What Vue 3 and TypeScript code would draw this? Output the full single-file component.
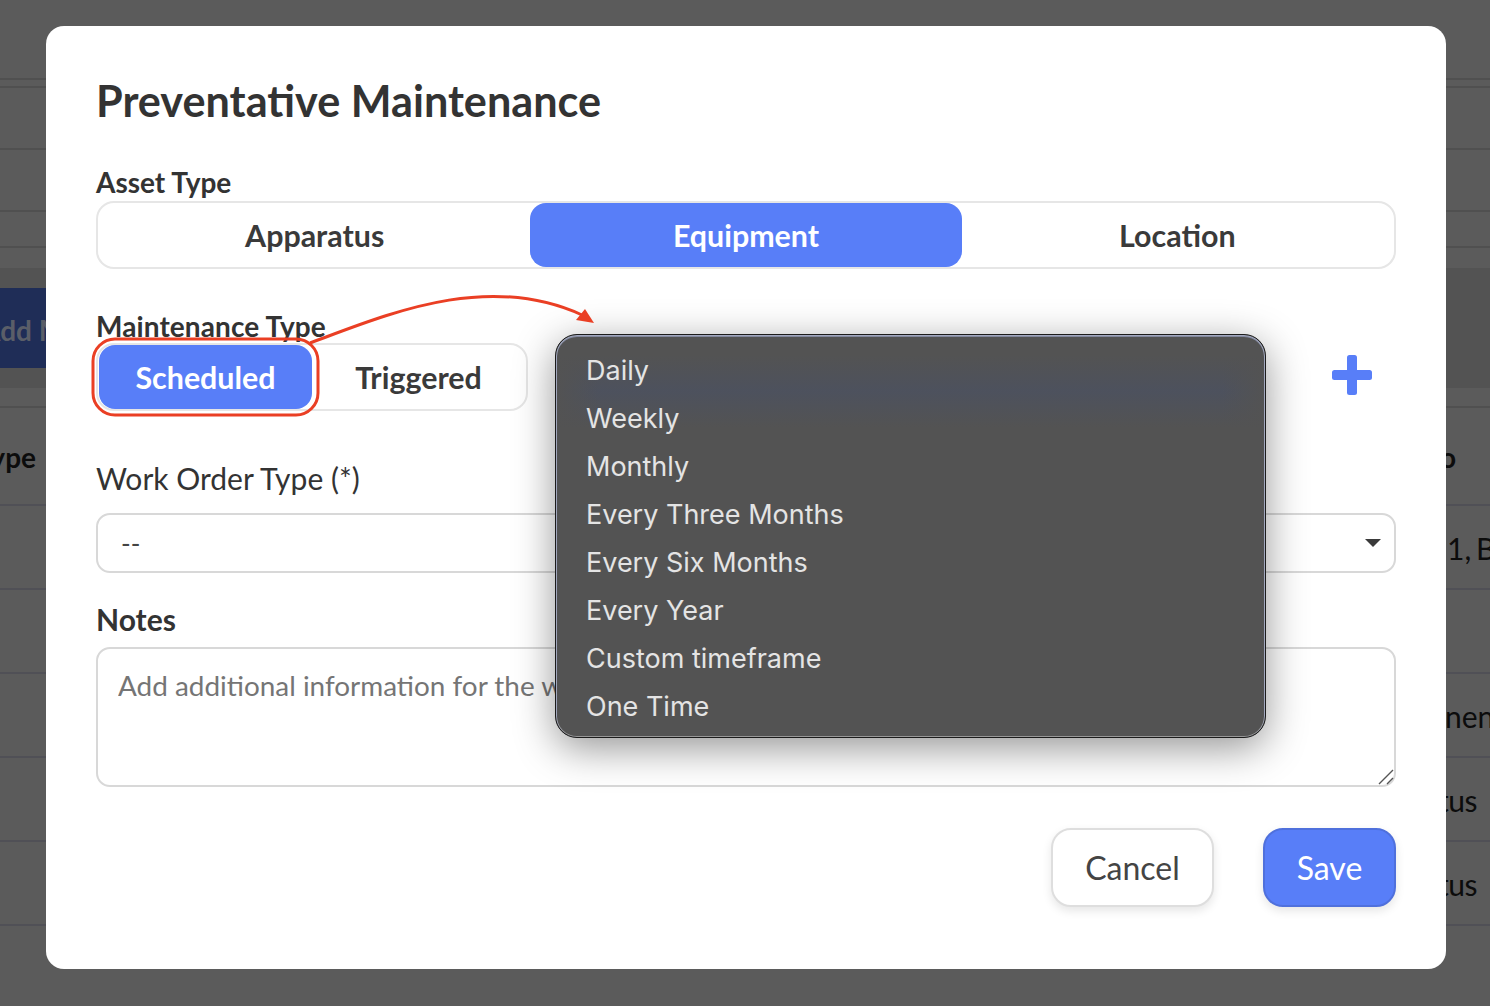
<script setup lang="ts">
const frequencies: string[] = [
  "Daily",
  "Weekly",
  "Monthly",
  "Every Three Months",
  "Every Six Months",
  "Every Year",
  "Custom timeframe",
  "One Time",
];

const rows = [
  { text: "1, B", kind: "" },
  { text: "", kind: "" },
  { text: "nent", kind: "shift" },
  { text: "tus", kind: "end" },
  { text: "tus", kind: "end" },
];
</script>

<template>
  <div class="page">
    <div class="backdrop">
      <div class="top-rule"></div>
      <div class="top-rule second"></div>
      <div class="stat-row"></div>
      <div class="stat-row"></div>
      <div class="stat-row short"></div>
      <div class="toolbar">
        <div class="add-btn"><span>Add M</span></div>
      </div>
      <div class="table-head">
        <span class="head-left">Type</span>
        <span class="head-right">o</span>
      </div>
      <div v-for="(row, i) in rows" :key="i" class="table-row">
        <span class="cell-right" :class="row.kind">{{ row.text }}</span>
      </div>
    </div>

    <div class="modal">
      <h1 class="title">Preventative Maintenance</h1>

      <div class="label bold">Asset Type</div>
      <div class="segment full">
        <button class="seg-btn">Apparatus</button>
        <button class="seg-btn active">Equipment</button>
        <button class="seg-btn">Location</button>
      </div>

      <div class="label bold second-label">Maintenance Type</div>
      <div class="maint-row">
        <div class="segment small">
          <button class="seg-btn active">Scheduled</button>
          <button class="seg-btn">Triggered</button>
        </div>
        <div class="freq-select"></div>
        <svg class="plus" viewBox="0 0 40 40" width="40" height="40">
          <rect x="15" y="0" width="10" height="40" rx="2.5" fill="#587ef8" />
          <rect x="0" y="15" width="40" height="10" rx="2.5" fill="#587ef8" />
        </svg>
      </div>

      <div class="label wo-label">Work Order Type (*)</div>
      <div class="select-box">
        <span>--</span>
        <i class="caret"></i>
      </div>

      <div class="label bold notes-label">Notes</div>
      <div class="notes">
        <span class="placeholder">Add additional information for the work order</span>
        <svg class="grip" viewBox="0 0 16 16" width="16" height="16">
          <path d="M1 15 L15 1 M9 15 L15 9" stroke="#555" stroke-width="1.4" fill="none" />
        </svg>
      </div>

      <div class="actions">
        <button class="action cancel">Cancel</button>
        <button class="action save">Save</button>
      </div>

      <ul class="menu">
        <li v-for="item in frequencies" :key="item">{{ item }}</li>
      </ul>

      <!-- annotation drawn on top of the screenshot -->
      <svg class="annotation" viewBox="0 0 560 130" width="560" height="130">
        <rect x="47" y="48" width="225" height="76" rx="22" fill="none" stroke="#ea3f24" stroke-width="3" />
        <path d="M264 52 C 340 24, 440 -20, 536 24" fill="none" stroke="#ea3f24" stroke-width="3" />
        <path d="M539 18 L548 32 L530 29 Z" fill="#ea3f24" />
      </svg>
    </div>
  </div>
</template>

<style>
html,
body {
  margin: 0;
  background: #5b5b5b;
}
</style>

<style scoped>
.page {
  position: relative;
  width: 1490px;
  height: 1006px;
  overflow: hidden;
  background: #5b5b5b;
  font-family: Lato, "Liberation Sans", sans-serif;
}

.backdrop {
  padding-top: 78px;
  color: #0c0c0c;
  font-size: 30px;
}
.top-rule {
  height: 8px;
  border-top: 2px solid #505050;
  box-sizing: border-box;
}
.top-rule.second {
  height: 2px;
}
.stat-row {
  height: 62px;
  border-bottom: 2px solid #505050;
  box-sizing: border-box;
}
.stat-row.short {
  height: 36px;
}
.toolbar {
  height: 120px;
  margin-top: 20px;
  padding-top: 20px;
  box-sizing: border-box;
  background: #535353;
}
.add-btn {
  width: 46px;
  height: 80px;
  box-sizing: border-box;
  padding-top: 4px;
  background: #1f2d57;
  display: flex;
  align-items: center;
  overflow: hidden;
  color: #5a5e68;
  font-size: 28px;
  font-weight: 700;
  white-space: nowrap;
}
.add-btn span {
  margin-left: -19px;
}
.table-head {
  margin-top: 18px;
  height: 100px;
  border-top: 2px solid #505050;
  border-bottom: 2px solid #505056;
  box-sizing: border-box;
  position: relative;
  font-size: 28px;
  font-weight: 700;
}
.head-left {
  position: absolute;
  right: 1454px;
  top: 32px;
}
.head-right {
  position: absolute;
  left: 1440px;
  top: 32px;
}
.table-row {
  height: 84px;
  border-bottom: 2px solid #505056;
  box-sizing: border-box;
  position: relative;
}
.cell-right {
  position: absolute;
  left: 1447px;
  top: 24px;
  white-space: nowrap;
  word-spacing: -3px;
}
.cell-right.shift {
  left: 1445px;
}
.cell-right.end {
  left: auto;
  right: 13px;
  letter-spacing: -0.5px;
}

.modal {
  position: absolute;
  left: 46px;
  top: 26px;
  width: 1400px;
  height: 943px;
  box-sizing: border-box;
  padding: 49px 50px 0;
  background: #fff;
  border-radius: 18px;
  color: #333;
}
.title {
  margin: 0;
  font-size: 43.2px;
  line-height: 50px;
  font-weight: 700;
  color: #333;
}
.label {
  font-size: 28px;
  line-height: 34px;
  color: #333;
}
.label.bold {
  font-weight: 700;
}
.title + .label {
  margin-top: 40px;
}
.second-label {
  margin-top: 40px;
  letter-spacing: 0.1px;
}
.wo-label {
  margin-top: 49px;
  font-size: 30px;
  line-height: 36px;
}
.notes-label {
  margin-top: 28px;
  font-size: 30px;
  line-height: 36px;
}

.segment {
  display: flex;
  box-sizing: border-box;
  height: 68px;
  padding: 0 1px;
  border: 2px solid #e6e6e6;
  border-radius: 18px;
}
.segment.full {
  width: 1300px;
  margin-top: 2px;
}
.segment.small {
  width: 432px;
  flex: none;
}
.seg-btn {
  flex: 1;
  border: 0;
  background: transparent;
  border-radius: 16px;
  font: 700 30.4px Lato, sans-serif;
  color: #3a3a3a;
  padding: 0;
}
.seg-btn.active {
  background: #587ef8;
  color: #fff;
}

.maint-row {
  display: flex;
  align-items: flex-start;
}
.freq-select {
  flex: none;
  width: 712px;
  height: 66px;
  margin-left: 26px;
}
.plus {
  flex: none;
  margin: 12px 0 0 66px;
}

.select-box {
  display: flex;
  align-items: center;
  justify-content: space-between;
  box-sizing: border-box;
  width: 1300px;
  height: 60px;
  margin-top: 17px;
  padding: 0 13px 0 23px;
  border: 2px solid #d8d8d8;
  border-radius: 14px;
  font-size: 26px;
  color: #444;
}
.caret {
  width: 0;
  height: 0;
  border-left: 8px solid transparent;
  border-right: 8px solid transparent;
  border-top: 8px solid #3a3a3a;
}

.notes {
  position: relative;
  box-sizing: border-box;
  width: 1300px;
  height: 140px;
  margin-top: 10px;
  padding: 18px 20px;
  border: 2px solid #d8d8d8;
  border-radius: 14px;
  font-size: 27.9px;
  line-height: 36px;
  color: #757575;
}
.placeholder {
  display: block;
  width: 437px;
  overflow: hidden;
  white-space: nowrap;
}
.grip {
  position: absolute;
  right: 0;
  bottom: 0;
}

.actions {
  display: flex;
  justify-content: flex-end;
  gap: 49px;
  width: 1300px;
  margin-top: 41px;
}
.action {
  height: 79px;
  border-radius: 20px;
  font: 400 32px Lato, sans-serif;
  box-shadow: 0 4px 10px rgba(0, 0, 0, 0.1);
  padding: 0;
  box-sizing: border-box;
}
.cancel {
  width: 163px;
  background: #fff;
  border: 2px solid #dedede;
  color: #444;
}
.save {
  width: 133px;
  background: #587ef8;
  border: 2px solid #4f70dc;
  color: #fff;
}

.menu {
  position: absolute;
  left: 509px;
  top: 308px;
  width: 711px;
  height: 404px;
  box-sizing: border-box;
  margin: 0;
  padding: 12px 0;
  list-style: none;
  border-radius: 22px;
  background:
    linear-gradient(90deg, #535353 0, rgba(83, 83, 83, 0) 6%, rgba(83, 83, 83, 0) 94%, #535353 100%),
    linear-gradient(180deg, rgba(72, 80, 102, 0) 5%, rgba(72, 80, 102, 0.55) 14%, rgba(72, 80, 102, 0) 23%),
    #535353;
  border: 1px solid #1c1c1c;
  box-shadow:
    inset 0 1px 0 1px rgba(170, 180, 220, 0.55),
    inset 0 0 0 1px rgba(255, 255, 255, 0.4),
    0 10px 40px rgba(0, 0, 0, 0.42);
  font-family: Inter, "Noto Sans", sans-serif;
  font-size: 27px;
  color: #e4e4e4;
}
.menu li {
  height: 48px;
  line-height: 48px;
  padding-left: 30px;
}

.annotation {
  position: absolute;
  left: 0;
  top: 265px;
  overflow: visible;
  pointer-events: none;
}
</style>
